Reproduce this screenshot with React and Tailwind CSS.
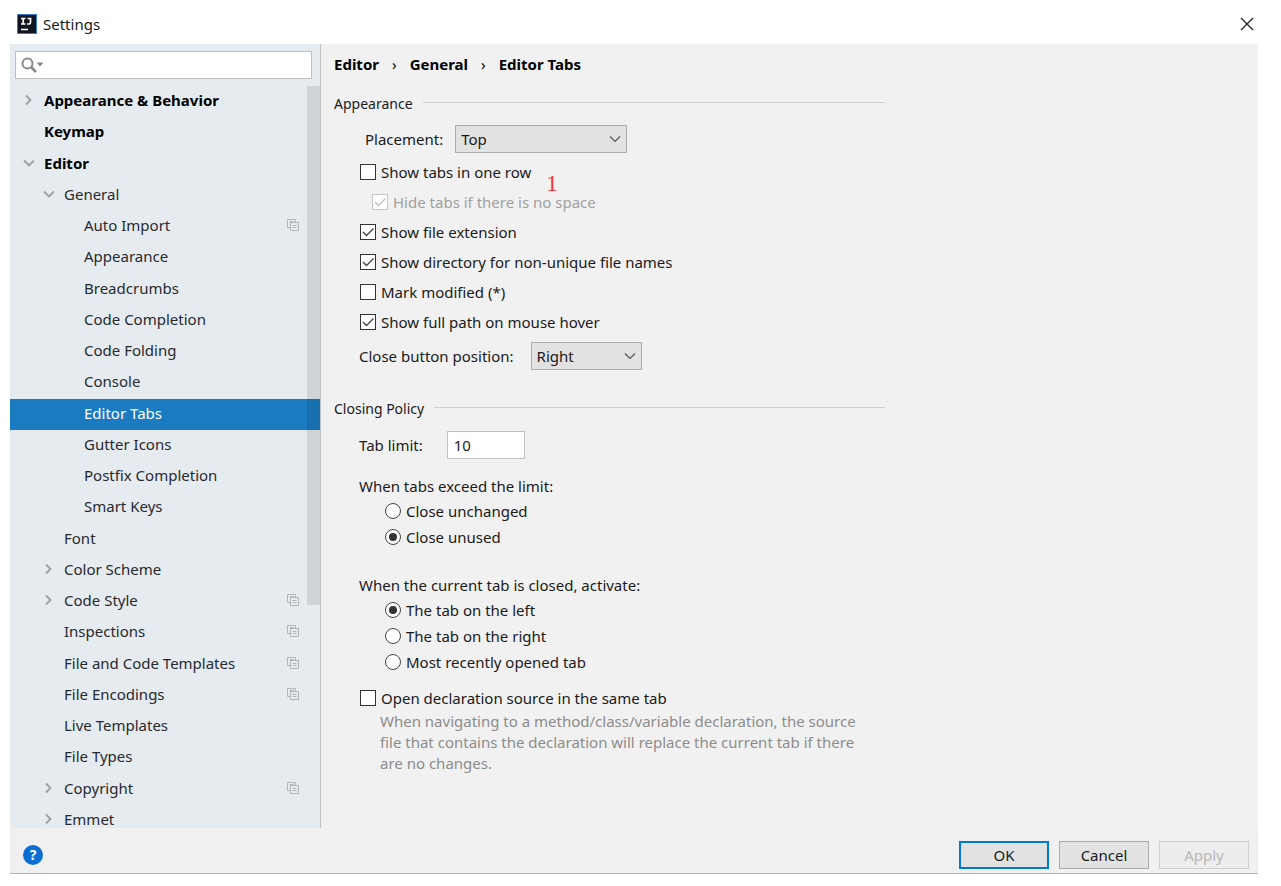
import { useState } from 'react';

const TREE = [
    { label: 'Appearance & Behavior', level: 0, arrow: 'closed' },
    { label: 'Keymap', level: 0 },
    { label: 'Editor', level: 0, arrow: 'open' },
    { label: 'General', level: 1, arrow: 'open' },
    { label: 'Auto Import', level: 2, project: true },
    { label: 'Appearance', level: 2 },
    { label: 'Breadcrumbs', level: 2 },
    { label: 'Code Completion', level: 2 },
    { label: 'Code Folding', level: 2 },
    { label: 'Console', level: 2 },
    { label: 'Editor Tabs', level: 2 },
    { label: 'Gutter Icons', level: 2 },
    { label: 'Postfix Completion', level: 2 },
    { label: 'Smart Keys', level: 2 },
    { label: 'Font', level: 1 },
    { label: 'Color Scheme', level: 1, arrow: 'closed' },
    { label: 'Code Style', level: 1, arrow: 'closed', project: true },
    { label: 'Inspections', level: 1, project: true },
    { label: 'File and Code Templates', level: 1, project: true },
    { label: 'File Encodings', level: 1, project: true },
    { label: 'Live Templates', level: 1 },
    { label: 'File Types', level: 1 },
    { label: 'Copyright', level: 1, arrow: 'closed', project: true },
    { label: 'Emmet', level: 1, arrow: 'closed' },
];

const INDENT = ['pl-3', 'pl-8', 'pl-[52px]'];

function Arrow({ open }) {
    return (
        <svg viewBox="0 0 12 12" className="size-3" fill="none" stroke="#9a9fa3" strokeWidth="1.8">
            {open ? <path d="M2 3.500 7 8.500 12 3.500" /> : <path d="M4 1.500 8.500 6 4 10.500" />}
        </svg>
    );
}

function ProjectIcon() {
    return (
        <svg viewBox="0 0 12 12" className="size-3" fill="none" stroke="#b0b6ba">
            <path d="M3 8.5H.5v-8h8V3" />
            <path d="M3.5 3.5h8v8h-8z" />
            <path d="M5.5 6.5h4M5.5 8.5h4M2.5 2.5h4" />
        </svg>
    );
}

function Logo() {
    return (
        <svg viewBox="0 0 20 20" className="size-5">
            <rect width="20" height="20" fill="#2f7fc6" />
            <rect x="1" y="1" width="18" height="18" fill="#10151f" />
            <path d="M4 4.500h4.500M6.200 4.500v5.500M4 10h4.500M10.500 4.500h3v4q0 1.500-1.500 1.500h-2" fill="none" stroke="#fff" strokeWidth="1.7" />
            <path d="M4 15.500h7" stroke="#fff" strokeWidth="1.5" />
        </svg>
    );
}

function TreeRow({ item, selected, onSelect }) {
    const color = selected ? 'bg-[#1a7bc0] text-white' : 'text-[#262a2e]';
    return (
        <li className="flex">
            <button type="button" onClick={onSelect} className={`flex flex-1 items-center pr-[21px] pb-[3px] text-left ${INDENT[item.level]} ${color} ${item.level === 0 ? 'font-bold text-black' : ''}`}>
                <span className="flex w-[22px] shrink-0 items-center">
                    {item.arrow && <Arrow open={item.arrow === 'open'} />}
                </span>
                <span className="flex-1">{item.label}</span>
                {item.project && <ProjectIcon />}
            </button>
        </li>
    );
}

function Check({ label, checked, disabled, className = 'h-[30px]' }) {
    return (
        <label className={`flex items-center gap-[5px] ${disabled ? 'text-[#a0a0a0]' : ''} ${className}`}>
            <span className="grid shrink-0">
                <input
                    type="checkbox"
                    defaultChecked={checked}
                    disabled={disabled}
                    className="peer col-start-1 row-start-1 size-4 appearance-none border border-[#333] bg-white disabled:border-[#c6c6c6]"
                />
                <svg viewBox="0 0 16 16" className="pointer-events-none invisible col-start-1 row-start-1 size-4 text-[#444] peer-checked:visible peer-disabled:text-[#c0c0c0]" fill="none" stroke="currentColor" strokeWidth="1.4">
                    <path d="M3 8 6.5 11.5 13.5 4.5" />
                </svg>
            </span>
            {label}
        </label>
    );
}

function Radio({ name, label, checked }) {
    return (
        <label className="flex h-[26px] items-center gap-[5px] pl-[26px]">
            <input
                type="radio"
                name={name}
                defaultChecked={checked}
                className="grid size-4 shrink-0 appearance-none place-items-center rounded-full border border-[#444] bg-white before:size-2 before:rounded-full checked:before:bg-[#333]"
            />
            {label}
        </label>
    );
}

function Select({ id, options, className }) {
    return (
        <span className={`grid h-7 ${className}`}>
            <select id={id} className="col-start-1 row-start-1 appearance-none border border-[#acacac] bg-[#e2e2e2] pl-[5px]">
                {options.map((option) => <option key={option}>{option}</option>)}
            </select>
            <svg viewBox="0 0 12 12" className="pointer-events-none col-start-1 row-start-1 mr-[6px] size-3 self-center justify-self-end" fill="none" stroke="#555" strokeWidth="1.2">
                <path d="M1 3.5 6 8.5 11 3.5" />
            </svg>
        </span>
    );
}

function SectionTitle({ children, className }) {
    return (
        <h2 className={`flex h-5 items-center gap-[10px] text-[14px] ${className}`}>
            {children}
            <span className="mb-1 h-px flex-1 bg-[#d0d0d0]" />
        </h2>
    );
}

export default function App() {
    const [selected, setSelected] = useState('Editor Tabs');

    return (
        <div className="flex h-screen flex-col bg-white pr-[23px] pb-3 pl-[10px] font-['Noto_Sans',sans-serif] text-[15px] leading-5 text-[#1a1a1a]">
            <header className="flex h-11 shrink-0 items-center pt-1 pr-[3px] pl-[7px]">
                <Logo />
                <h1 className="ml-[6px] flex-1">Settings</h1>
                <button type="button" aria-label="Close" className="p-px">
                    <svg viewBox="0 0 14 14" className="size-[14px]" fill="none" stroke="#222" strokeWidth="1.3">
                        <path d="M1 1 13 13M13 1 1 13" />
                    </svg>
                </button>
            </header>

            <div className="flex min-h-0 flex-1 bg-[#f1f1f1]">
                <aside className="flex w-[311px] shrink-0 flex-col overflow-hidden border-r border-[#bfc3c6] bg-[#e6ebf0] pt-[7px]">
                    <label className="mr-2 ml-[5px] flex h-7 shrink-0 items-center border border-[#bcbfc1] bg-white pl-[5px]">
                        <svg viewBox="0 0 24 16" className="h-4 w-6 shrink-0" fill="none" stroke="#8a8a8a" strokeWidth="2">
                            <circle cx="6.5" cy="6.5" r="5" />
                            <path d="M10 10 15 15" strokeWidth="2.6" />
                            <path d="M15.500 5.500h7l-3.500 4z" fill="#8a8a8a" stroke="none" />
                        </svg>
                        <input type="text" aria-label="Search settings" className="min-w-0 flex-1 outline-none" />
                    </label>
                    <nav className="relative mt-[7px] min-h-0 flex-1">
                        <ul className="grid h-[750px] auto-rows-fr">
                            {TREE.map((item) => (
                                <TreeRow
                                    key={item.label}
                                    item={item}
                                    selected={selected === item.label}
                                    onSelect={() => setSelected(item.label)}
                                />
                            ))}
                        </ul>
                        <div className="pointer-events-none absolute top-0 right-0 h-[519px] w-[13px] bg-black/10" />
                    </nav>
                </aside>

                <main className="min-w-0 flex-1 overflow-hidden pt-2 pl-[13px]">
                    <div className="max-w-[551px]">
                        <div className="flex h-6 items-center gap-[13px] font-bold text-black">
                            <span>Editor</span>
                            <span className="font-normal">›</span>
                            <span>General</span>
                            <span className="font-normal">›</span>
                            <span>Editor Tabs</span>
                        </div>

                        <SectionTitle className="mt-[18px]">Appearance</SectionTitle>
                        <div className="mt-[11px] flex items-center gap-3 pl-[31px]">
                            <label htmlFor="placement">Placement:</label>
                            <Select id="placement" options={['Top', 'Bottom', 'Left', 'Right', 'None']} className="w-[172px]" />
                        </div>
                        <div className="relative mt-1 pl-[26px]">
                            <Check label="Show tabs in one row" />
                            <Check label="Hide tabs if there is no space" checked disabled className="h-[30px] pl-3" />
                            <Check label="Show file extension" checked />
                            <Check label="Show directory for non-unique file names" checked />
                            <Check label="Mark modified (*)" />
                            <Check label="Show full path on mouse hover" checked />
                            <span className="absolute top-[14px] left-[212px] font-['Liberation_Serif',serif] text-[24px] leading-6 text-[#f5333f]">1</span>
                        </div>
                        <div className="mt-[5px] flex items-center gap-[17px] pl-[25px]">
                            <label htmlFor="close-position">Close button position:</label>
                            <Select id="close-position" options={['Right', 'Left', 'None']} className="w-[111px]" />
                        </div>

                        <SectionTitle className="mt-[29px]">Closing Policy</SectionTitle>
                        <div className="mt-3 flex items-center gap-6 pl-[25px]">
                            <label htmlFor="tab-limit">Tab limit:</label>
                            <input id="tab-limit" type="text" defaultValue="10" className="h-7 w-[78px] border border-[#c0c0c0] bg-white pl-[6px]" />
                        </div>
                        <fieldset className="mt-[15px] pl-[25px]">
                            <legend className="h-6 leading-6">When tabs exceed the limit:</legend>
                            <Radio name="exceed" label="Close unchanged" />
                            <Radio name="exceed" label="Close unused" checked />
                        </fieldset>
                        <fieldset className="mt-[23px] pl-[25px]">
                            <legend className="h-6 leading-6">When the current tab is closed, activate:</legend>
                            <Radio name="activate" label="The tab on the left" checked />
                            <Radio name="activate" label="The tab on the right" />
                            <Radio name="activate" label="Most recently opened tab" />
                        </fieldset>
                        <div className="mt-[10px] pl-[26px]">
                            <Check label="Open declaration source in the same tab" className="h-[26px]" />
                            <p className="pl-5 leading-[21px] text-[#8c8c8c]">
                                When navigating to a method/class/variable declaration, the source
                                <br />
                                file that contains the declaration will replace the current tab if there
                                <br />
                                are no changes.
                            </p>
                        </div>
                    </div>
                </main>
            </div>

            <footer className="flex h-[46px] shrink-0 items-center gap-[10px] border-b border-[#b5b5b5] bg-[#f0f0f0] pt-2 pr-[9px] pl-[13px]">
                <button type="button" aria-label="Help" className="mr-auto size-5 rounded-full bg-[#0a6fd0] text-[14px] font-bold text-white">?</button>
                <button type="button" className="h-7 w-[90px] border-2 border-[#0078d7] bg-[#e2e2e2]">OK</button>
                <button type="button" className="h-7 w-[90px] border border-[#adadad] bg-[#e2e2e2]">Cancel</button>
                <button type="button" disabled className="h-7 w-[90px] border border-[#d0d0d0] bg-[#ededed] text-[#b8b8b8]">Apply</button>
            </footer>
        </div>
    );
}
